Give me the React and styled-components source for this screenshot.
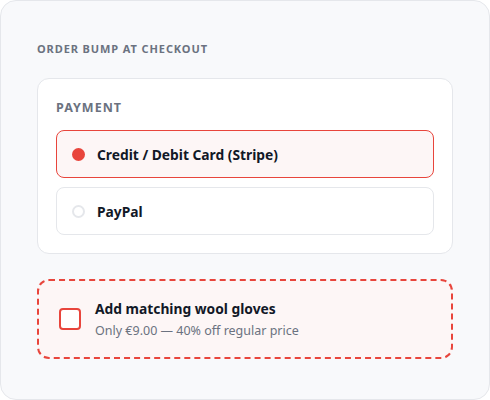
import styled, { createGlobalStyle } from 'styled-components';

const GlobalStyle = createGlobalStyle`
  * { box-sizing: border-box; }
  body {
    margin: 0;
    font-family: 'Noto Sans', 'Open Sans', sans-serif;
    background: #ffffff;
  }
`;

const Shell = styled.div`
  width: 490px;
  height: 400px;
  padding: 40px 36px;
  background: #f8f9fb;
  border: 1px solid #e5e7eb;
  border-radius: 16px;
  display: flex;
  flex-direction: column;
`;

const Heading = styled.h2`
  margin: 0 0 21px;
  font-size: 11px;
  line-height: 16px;
  font-weight: 700;
  letter-spacing: 0.9px;
  text-transform: uppercase;
  color: #6b7280;
`;

const Card = styled.section`
  background: #ffffff;
  border: 1px solid #e5e7eb;
  border-radius: 12px;
  padding: 20px 18px 18px;
  display: flex;
  flex-direction: column;
  gap: 9px;
`;

const CardLabel = styled.h3`
  margin: 0 0 4px;
  font-size: 12.5px;
  line-height: 18px;
  font-weight: 700;
  letter-spacing: 1px;
  text-transform: uppercase;
  color: #6b7280;
`;

const Option = styled.label`
  height: 48px;
  padding: 0 15px;
  display: flex;
  align-items: center;
  gap: 12px;
  border-radius: 8px;
  border: 1px solid ${(p) => (p.selected ? '#e8453c' : '#e5e7eb')};
  background: ${(p) => (p.selected ? '#fdf6f6' : '#ffffff')};
  cursor: pointer;
`;

const Radio = styled.span`
  width: 13px;
  height: 13px;
  border-radius: 50%;
  flex-shrink: 0;
  background: ${(p) => (p.checked ? '#e8453c' : '#ffffff')};
  border: ${(p) => (p.checked ? 'none' : '2px solid #e5e7eb')};
`;

const OptionText = styled.span`
  font-size: 13.8px;
  font-weight: 700;
  color: #111827;
`;

const Bump = styled.label`
  margin-top: 25px;
  height: 80px;
  padding: 0 20px;
  display: flex;
  align-items: center;
  gap: 14px;
  border: 2px dashed #e8453c;
  border-radius: 12px;
  background: #fdf6f6;
  cursor: pointer;
`;

const Checkbox = styled.span`
  width: 22px;
  height: 22px;
  flex-shrink: 0;
  border: 2px solid #e8453c;
  border-radius: 4px;
  background: #ffffff;
`;

const BumpBody = styled.div`
  display: flex;
  flex-direction: column;
  gap: 3px;
`;

const BumpTitle = styled.span`
  font-size: 13.8px;
  line-height: 20px;
  font-weight: 700;
  color: #111827;
`;

const BumpSub = styled.span`
  font-size: 12.5px;
  line-height: 18px;
  color: #6b7280;
`;

const methods = [
  { id: 'stripe', label: 'Credit / Debit Card (Stripe)' },
  { id: 'paypal', label: 'PayPal' },
];

export default function App() {
  const selected = 'stripe';
  return (
    <>
      <GlobalStyle />
      <Shell>
        <Heading>Order bump at checkout</Heading>
        <Card>
          <CardLabel>Payment</CardLabel>
          {methods.map((m) => (
            <Option key={m.id} selected={m.id === selected}>
              <Radio checked={m.id === selected} />
              <OptionText>{m.label}</OptionText>
            </Option>
          ))}
        </Card>
        <Bump>
          <Checkbox />
          <BumpBody>
            <BumpTitle>Add matching wool gloves</BumpTitle>
            <BumpSub>Only €9.00 — 40% off regular price</BumpSub>
          </BumpBody>
        </Bump>
      </Shell>
    </>
  );
}
